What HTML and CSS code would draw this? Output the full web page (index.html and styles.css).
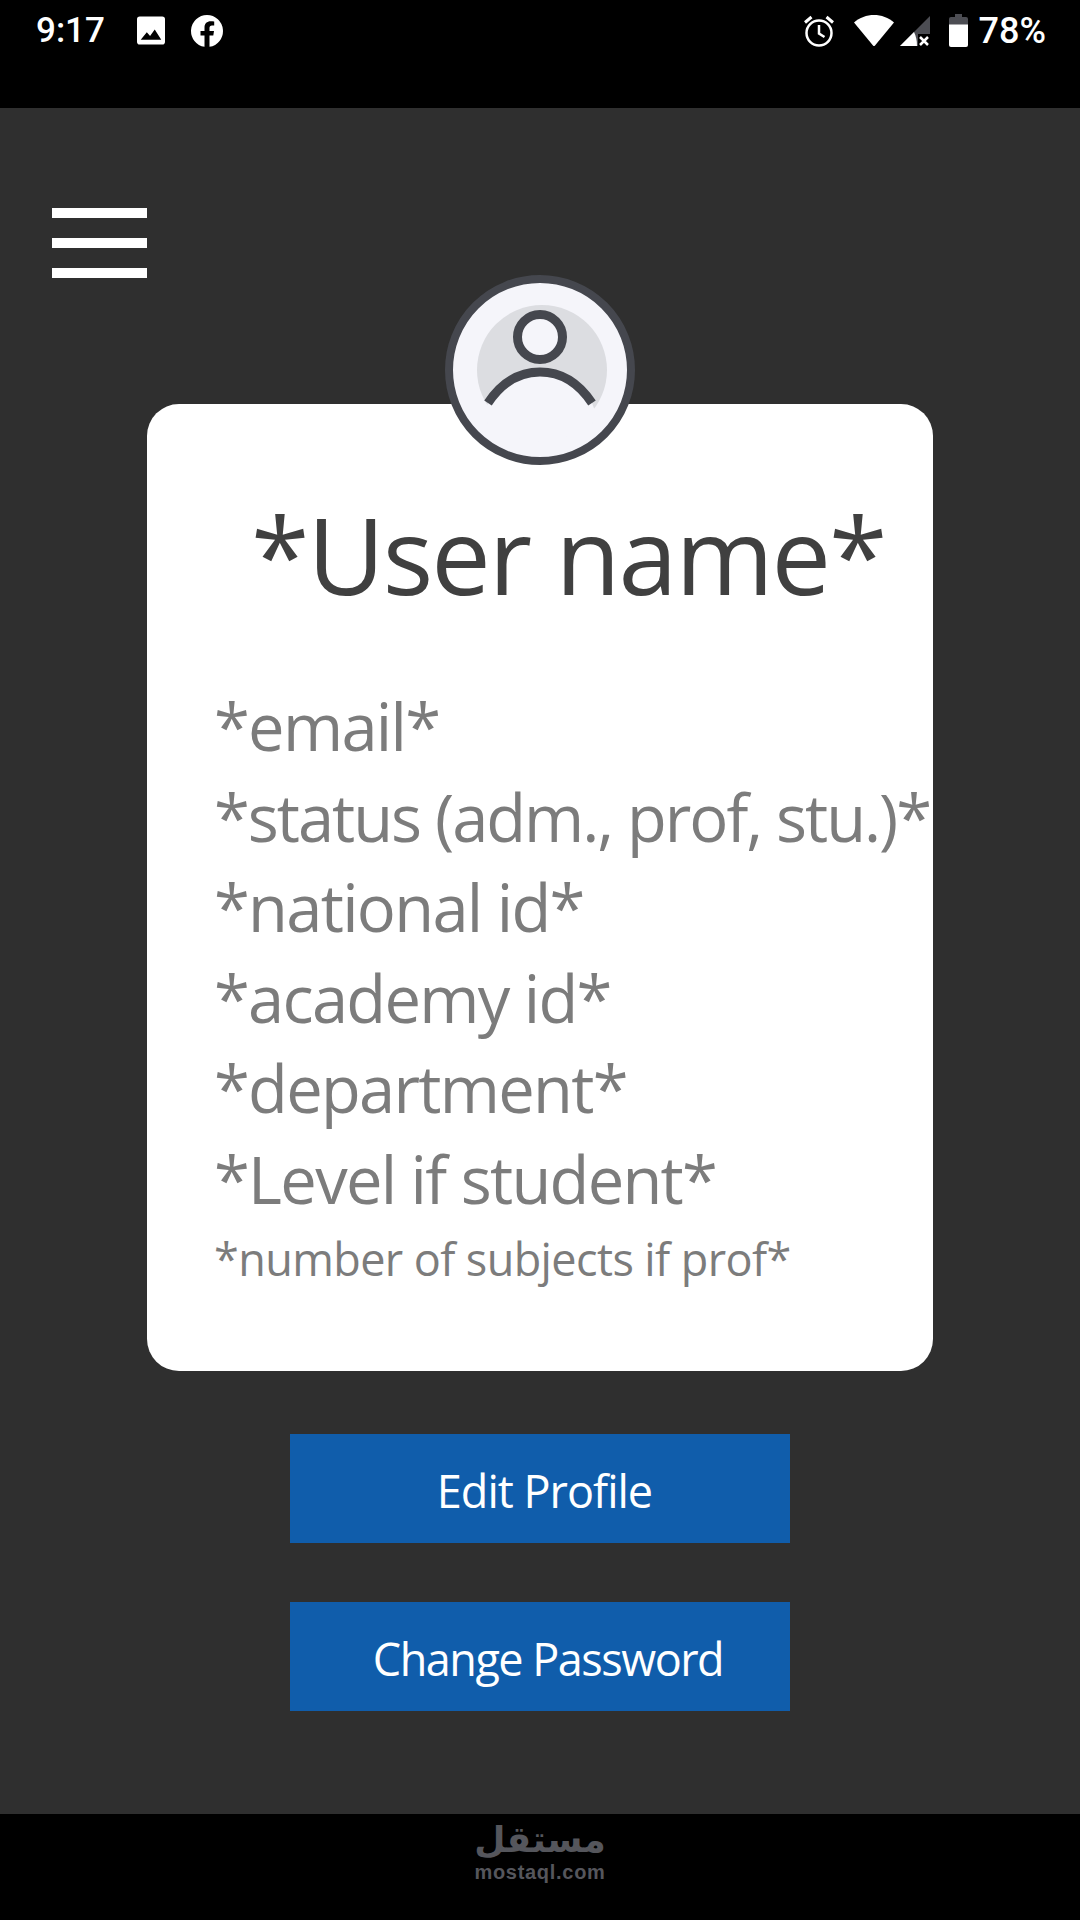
FILE: index.html
```html
<!DOCTYPE html>
<html lang="en">
<head>
    <meta charset="UTF-8">
    <meta name="viewport" content="width=device-width, initial-scale=1.0">
    <title>Profile</title>
    <link rel="stylesheet" href="styles.css">
</head>
<body>

<div class="status-bar">
    <div class="status-left">
        <span class="time">9:17</span>
        <svg class="icon-image" width="28" height="29" viewBox="0 0 30 30">
            <path fill="#fff" fill-rule="evenodd" d="M3 0H27A3 3 0 0 1 30 3V27A3 3 0 0 1 27 30H3A3 3 0 0 1 0 27V3A3 3 0 0 1 3 0ZM4 25H26L19 14L14 21L10.500 17Z"/>
        </svg>
        <svg class="icon-fb" width="32" height="32" viewBox="0 0 32 32">
            <path fill="#fff" d="M16 0A16 16 0 0 1 18.500 31.800V20.500H22.300L23 16H18.500V13C18.500 11.700 19.200 10.500 21 10.500H23.200V6.600C22 6.400 20.800 6.300 19.700 6.300C16 6.300 13.500 8.500 13.500 12.600V16H9.500V20.500H13.500V31.800A16 16 0 0 1 16 0Z"/>
        </svg>
    </div>
    <div class="status-right">
        <svg class="icon-alarm" width="30" height="32" viewBox="0 0 30 32">
            <circle cx="15" cy="18" r="12.500" fill="none" stroke="#fff" stroke-width="2.500"/>
            <path d="M15 10V18.500L20.500 22" fill="none" stroke="#fff" stroke-width="2.500"/>
            <path d="M1 7.500L7.500 2M29 7.500L22.500 2" fill="none" stroke="#fff" stroke-width="3"/>
        </svg>
        <svg class="icon-wifi" width="40" height="32" viewBox="0 0 40 32">
            <path fill="#fff" d="M0 7.500C11 -2.500 29 -2.500 40 7.500L21 30.500Q20 31.500 19 30.500Z"/>
        </svg>
        <svg class="icon-signal" width="30" height="30" viewBox="0 0 30 30">
            <path fill="#4c4d53" d="M30 0V30H0Z"/>
            <path fill="#fff" d="M0 30L14 16Q17 22 17 30Z"/>
            <path fill="#000" d="M18 18H30V30H18Z"/>
            <path d="M20 21L28 29M28 21L20 29" stroke="#fff" stroke-width="2.500"/>
        </svg>
        <svg class="icon-battery" width="19" height="33" viewBox="0 0 19 33">
            <path fill="#4c4d53" d="M6 0H13V3H17A2 2 0 0 1 19 5V12H0V5A2 2 0 0 1 2 3H6Z"/>
            <path fill="#fff" d="M0 10.500H19V31A2 2 0 0 1 17 33H2A2 2 0 0 1 0 31Z"/>
        </svg>
        <span class="battery-level">78%</span>
    </div>
</div>

<div class="screen">
    <div class="menu-icon">
        <span></span>
        <span></span>
        <span></span>
    </div>

    <div class="card">
        <svg class="avatar" width="192" height="192" viewBox="0 0 192 192">
            <circle cx="96" cy="96" r="91" fill="#f5f5fa" stroke="#45474e" stroke-width="8"/>
            <circle cx="98" cy="96" r="65" fill="#dcdde1"/>
            <path fill="#f5f5fa" d="M44 129C58 108 76 98 96 98C116 98 134 108 148 129L154 145Q96 190 38 145Z"/>
            <circle cx="96" cy="63" r="22.500" fill="#f5f5fa" stroke="#45474e" stroke-width="9"/>
            <path d="M44 129C58 108 76 98 96 98C116 98 134 108 148 129" fill="none" stroke="#45474e" stroke-width="9"/>
        </svg>
        <h1 class="user-name">*User name*</h1>
        <p class="info">*email*</p>
        <p class="info info-status">*status (adm., prof, stu.)*</p>
        <p class="info">*national id*</p>
        <p class="info">*academy id*</p>
        <p class="info">*department*</p>
        <p class="info">*Level if student*</p>
        <p class="info-small">*number of subjects if prof*</p>
    </div>

    <button class="btn btn-edit">Edit Profile</button>
    <button class="btn btn-password">Change Password</button>
</div>

<div class="bottom-bar">
    <span class="logo-ar" lang="ar" dir="rtl">مستقل</span>
    <span class="logo-en">mostaql.com</span>
</div>

</body>
</html>
```

FILE: styles.css
```css
* {
    box-sizing: border-box;
}
body {
    font-family: "Open Sans", "Noto Sans", sans-serif;
    background-color: #000;
    margin: 0;
    padding: 0;
    width: 1080px;
    height: 1920px;
    display: flex;
    flex-direction: column;
    overflow: hidden;
}
.status-bar {
    height: 108px;
    background-color: #000;
    color: #fff;
    display: flex;
    justify-content: space-between;
    align-items: flex-start;
    padding: 14px 34px 0 36px;
    font-family: "Roboto", sans-serif;
    font-size: 35px;
    font-weight: 500;
}
.status-left, .status-right {
    display: flex;
    align-items: center;
    height: 33px;
}
.time {
    width: 101px;
}
.battery-level {
    font-size: 36px;
}
.icon-fb {
    margin-left: 26px;
}
.icon-alarm {
    margin-right: 20px;
}
.icon-wifi {
    margin-right: 6px;
}
.icon-signal {
    margin-right: 19px;
}
.icon-battery {
    margin-right: 11px;
}
.screen {
    height: 1706px;
    background-color: #2f2f2f;
    display: flex;
    flex-direction: column;
    align-items: center;
    padding-top: 100px;
    position: relative;
}
.menu-icon {
    align-self: flex-start;
    margin-left: 52px;
    width: 95px;
    display: flex;
    flex-direction: column;
    gap: 20px;
}
.menu-icon span {
    display: block;
    height: 10px;
    background-color: #fff;
}
.card {
    width: 786px;
    height: 967px;
    margin-top: 126px;
    background-color: #fff;
    border-radius: 32px;
    padding: 95px 0 0 67px;
    position: relative;
}
.avatar {
    position: absolute;
    left: 297px;
    top: -130px;
}
.user-name {
    margin: 0 0 72px 37px;
    font-size: 106px;
    font-weight: 400;
    line-height: 110px;
    letter-spacing: -2px;
    color: #404040;
    white-space: nowrap;
}
.info {
    margin: 0;
    font-size: 65px;
    line-height: 90.500px;
    letter-spacing: -1.700px;
    color: #7c7c7c;
    white-space: nowrap;
}
.info-status {
    letter-spacing: -2px;
}
.info-small {
    margin: 0;
    font-size: 45px;
    line-height: 70px;
    letter-spacing: -0.600px;
    color: #7c7c7c;
    white-space: nowrap;
}
.btn {
    width: 500px;
    height: 109px;
    padding-top: 4px;
    background-color: #105dab;
    color: #fff;
    border: none;
    border-radius: 0;
    font-family: inherit;
    font-size: 45px;
}
.btn-edit {
    margin-top: 63px;
    padding-left: 15px;
    letter-spacing: -1px;
}
.btn-password {
    margin-top: 59px;
    padding-left: 22px;
    letter-spacing: -1.500px;
}
.bottom-bar {
    height: 106px;
    background-color: #000;
    display: flex;
    flex-direction: column;
    align-items: center;
    color: #55565c;
}
.logo-ar {
    font-family: "DejaVu Sans", sans-serif;
    font-weight: bold;
    font-size: 36px;
    line-height: 44px;
    margin-top: 4px;
}
.logo-en {
    font-family: "Liberation Sans", sans-serif;
    font-weight: bold;
    font-size: 20px;
    line-height: 20px;
    letter-spacing: 0.700px;
}
```
